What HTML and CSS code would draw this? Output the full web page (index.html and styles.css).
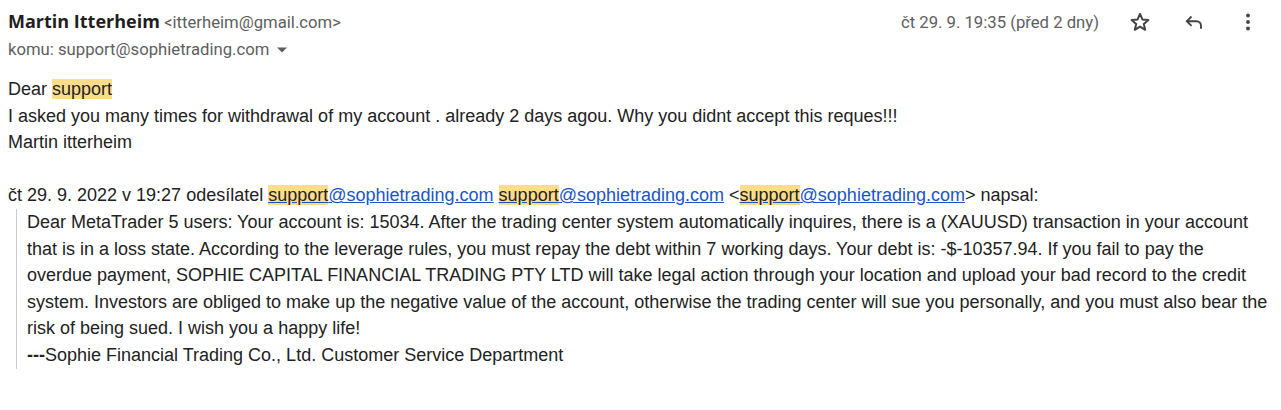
FILE: index.html
```html
<!DOCTYPE html>
<html lang="cs">
<head>
<meta charset="utf-8">
<link rel="stylesheet" href="styles.css">
</head>
<body>
<div class="mail">
  <div class="head">
    <div class="who">
      <div class="from"><span class="name">Martin Itterheim</span> <span class="addr">&lt;itterheim@gmail.com&gt;</span></div>
      <div class="to">komu: support@sophietrading.com <svg class="caret" width="10" height="6" viewBox="0 0 10 5"><path d="M0 0h10L5 5z" fill="#5e5e5e"/></svg></div>
    </div>
    <div class="meta">
      <span class="date">čt 29. 9. 19:35 (před 2 dny)</span>
      <span class="icon star"><svg width="24" height="24" viewBox="0 0 24 24"><path d="M12 3.8l2.4 5.6 6 .5-4.6 4 1.4 5.9L12 16.7l-5.2 3.1 1.4-5.9-4.6-4 6-.5z" fill="none" stroke="#444" stroke-width="2" stroke-linejoin="round"/></svg></span>
      <span class="icon reply"><svg width="24" height="24" viewBox="0 0 24 24"><path d="M9.5 6.5L4.8 11.2l4.7 4.7M5 11.2h9.5a4.5 4.5 0 0 1 4.5 4.5v3" fill="none" stroke="#444" stroke-width="1.9"/></svg></span>
      <span class="icon more"><svg width="24" height="24" viewBox="0 0 24 24"><circle cx="12" cy="5.5" r="1.9" fill="#444"/><circle cx="12" cy="12" r="1.9" fill="#444"/><circle cx="12" cy="18.5" r="1.9" fill="#444"/></svg></span>
    </div>
  </div>
  <div class="body">
    <div>Dear <mark>support</mark></div>
    <div>I asked you many times for withdrawal of my account . already 2 days agou. Why you didnt accept this reques!!!</div>
    <div>Martin itterheim</div>
    <div class="gap"></div>
    <div class="attr">čt 29. 9. 2022 v 19:27 odesílatel <a href="#"><mark>support</mark>@sophietrading.com</a> <a href="#"><mark>support</mark>@sophietrading.com</a> &lt;<a href="#"><mark>support</mark>@sophietrading.com</a>&gt; napsal:</div>
    <blockquote class="quote">
      <div>Dear MetaTrader 5 users: Your account is: 15034. After the trading center system automatically inquires, there is a (XAUUSD) transaction in your account that is in a loss state. According to the leverage rules, you must repay the debt within 7 working days. Your debt is: -$-10357.94. If you fail to pay the overdue payment, SOPHIE CAPITAL FINANCIAL TRADING PTY LTD will take legal action through your location and upload your bad record to the credit system. Investors are obliged to make up the negative value of the account, otherwise the trading center will sue you personally, and you must also bear the risk of being sued. I wish you a happy life!</div>
      <div><b>---</b>Sophie Financial Trading Co., Ltd. Customer Service Department</div>
    </blockquote>
  </div>
</div>
</body>
</html>
```
FILE: styles.css
```css
html, body { margin: 0; background: #fff; }
body { width: 1281px; height: 410px; overflow: hidden; }
.mail { padding: 8px 0 0 8px; }
.head { display: flex; justify-content: space-between; align-items: flex-start; }
.from { font-family: "Open Sans", Roboto, sans-serif; line-height: 26px; }
.name { font-size: 18px; font-weight: 700; color: #1f1f1f; }
.addr { font-family: Roboto, sans-serif; font-size: 16.7px; color: #5e5e5e; }
.to { font-family: Roboto, sans-serif; font-size: 16.7px; color: #5e5e5e; line-height: 28px; display: flex; align-items: center; gap: 8px; }
.meta { display: flex; align-items: center; height: 28px; padding-right: 6px; }
.date { font-family: Roboto, sans-serif; font-size: 16.7px; color: #5e5e5e; margin-right: 14px; }
.icon { width: 54px; display: flex; justify-content: center; }
.body { font-family: "Liberation Sans", Arial, sans-serif; font-size: 18px; line-height: 26.6px; color: #222; padding-top: 12px; padding-right: 11px; }
.gap { height: 26.6px; }
mark { background: #fddc8a; color: #222; }
a { color: #1a55c7; text-decoration: underline; }
.quote { margin: 0 0 0 8px; padding-left: 10px; border-left: 1px solid #ccc; }
```
